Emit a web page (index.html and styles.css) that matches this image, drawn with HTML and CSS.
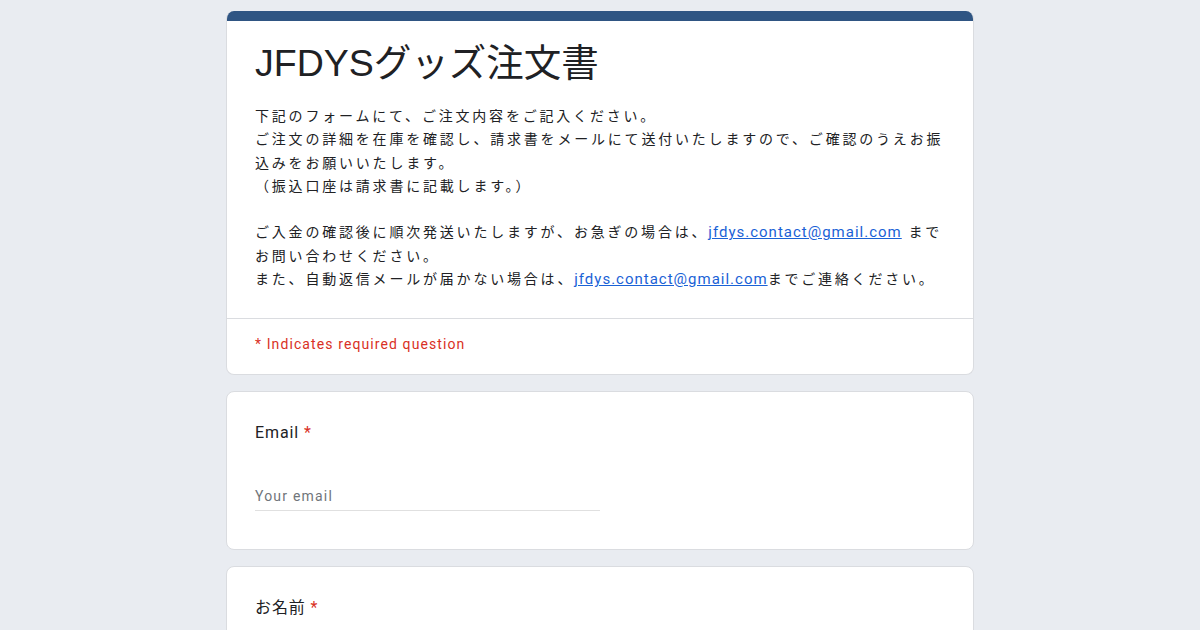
FILE: index.html
```html
<!DOCTYPE html>
<html lang="ja">
  <head>
    <meta charset="UTF-8" />
    <meta name="viewport" content="width=device-width, initial-scale=1.0" />
    <title>JFDYSグッズ注文書</title>
    <link rel="stylesheet" href="styles.css">
  </head>
  <body>
    <div class="container">
      <!-- ヘッダー -->
      <div class="card header-card">
        <div class="header-bar"></div>
        <div class="header-body">
          <h1>JFDYSグッズ注文書</h1>
          <div class="description">
            下記のフォームにて、ご注文内容をご記入ください。<br>
            ご注文の詳細を在庫を確認し、請求書をメールにて送付いたしますので、ご確認のうえお振込みをお願いいたします。<br>
            （振込口座は請求書に記載します。）<br>
            <br>
            ご入金の確認後に順次発送いたしますが、お急ぎの場合は、<a href="#">jfdys.contact@gmail.com</a> までお問い合わせください。<br>
            また、自動返信メールが届かない場合は、<a href="#">jfdys.contact@gmail.com</a>までご連絡ください。
          </div>
        </div>
        <div class="required-note">* Indicates required question</div>
      </div>

      <!-- Email -->
      <div class="card question">
        <div class="question-title">Email <span class="star">*</span></div>
        <div class="text-input">Your email</div>
      </div>

      <!-- お名前 -->
      <div class="card question">
        <div class="question-title">お名前 <span class="star">*</span></div>
        <div class="text-input">Your answer</div>
      </div>
    </div>
  </body>
</html>
```

FILE: styles.css
```css
body {
  margin: 0;
  padding: 11px 0 20px;
  background-color: #e9ecf1;
  font-family: Roboto, "Noto Sans CJK JP", sans-serif;
  color: #202124;
}

.container {
  width: 748px;
  margin: 0 auto;
}

.card {
  background: white;
  border: 1px solid #dadce0;
  border-radius: 8px;
  margin-bottom: 16px;
  overflow: hidden;
}

.header-card {
  border-top: none;
}

.header-bar {
  height: 10px;
  background-color: #2f5583;
}

.header-body {
  padding: 15px 28px 27px;
  border-bottom: 1px solid #dadce0;
}

h1 {
  margin: 0 0 15px;
  font-family: "Liberation Sans", "Noto Sans CJK JP", sans-serif;
  font-size: 37.5px;
  font-weight: normal;
  line-height: 54px;
  color: #202124;
}

.description {
  font-family: "Liberation Sans", "Noto Sans CJK JP", sans-serif;
  font-size: 14px;
  line-height: 23.3px;
  letter-spacing: 2.8px;
  color: #202124;
}

.description a {
  font-family: Roboto, sans-serif;
  letter-spacing: 1px;
  font-size: 15px;
  color: #1a62d6;
}

.required-note {
  padding: 17px 28px 22px;
  font-size: 14px;
  letter-spacing: 1.1px;
  color: #d93025;
}

.question {
  padding: 29px 28px 38px;
}

.question-title {
  font-size: 16px;
  line-height: 24px;
  letter-spacing: 0.9px;
  color: #202124;
}

.star {
  color: #d93025;
}

.text-input {
  width: 345px;
  margin-top: 43px;
  padding-bottom: 6px;
  border-bottom: 1px solid #e0e0e0;
  font-size: 14px;
  letter-spacing: 1.2px;
  color: #70757a;
}
```
